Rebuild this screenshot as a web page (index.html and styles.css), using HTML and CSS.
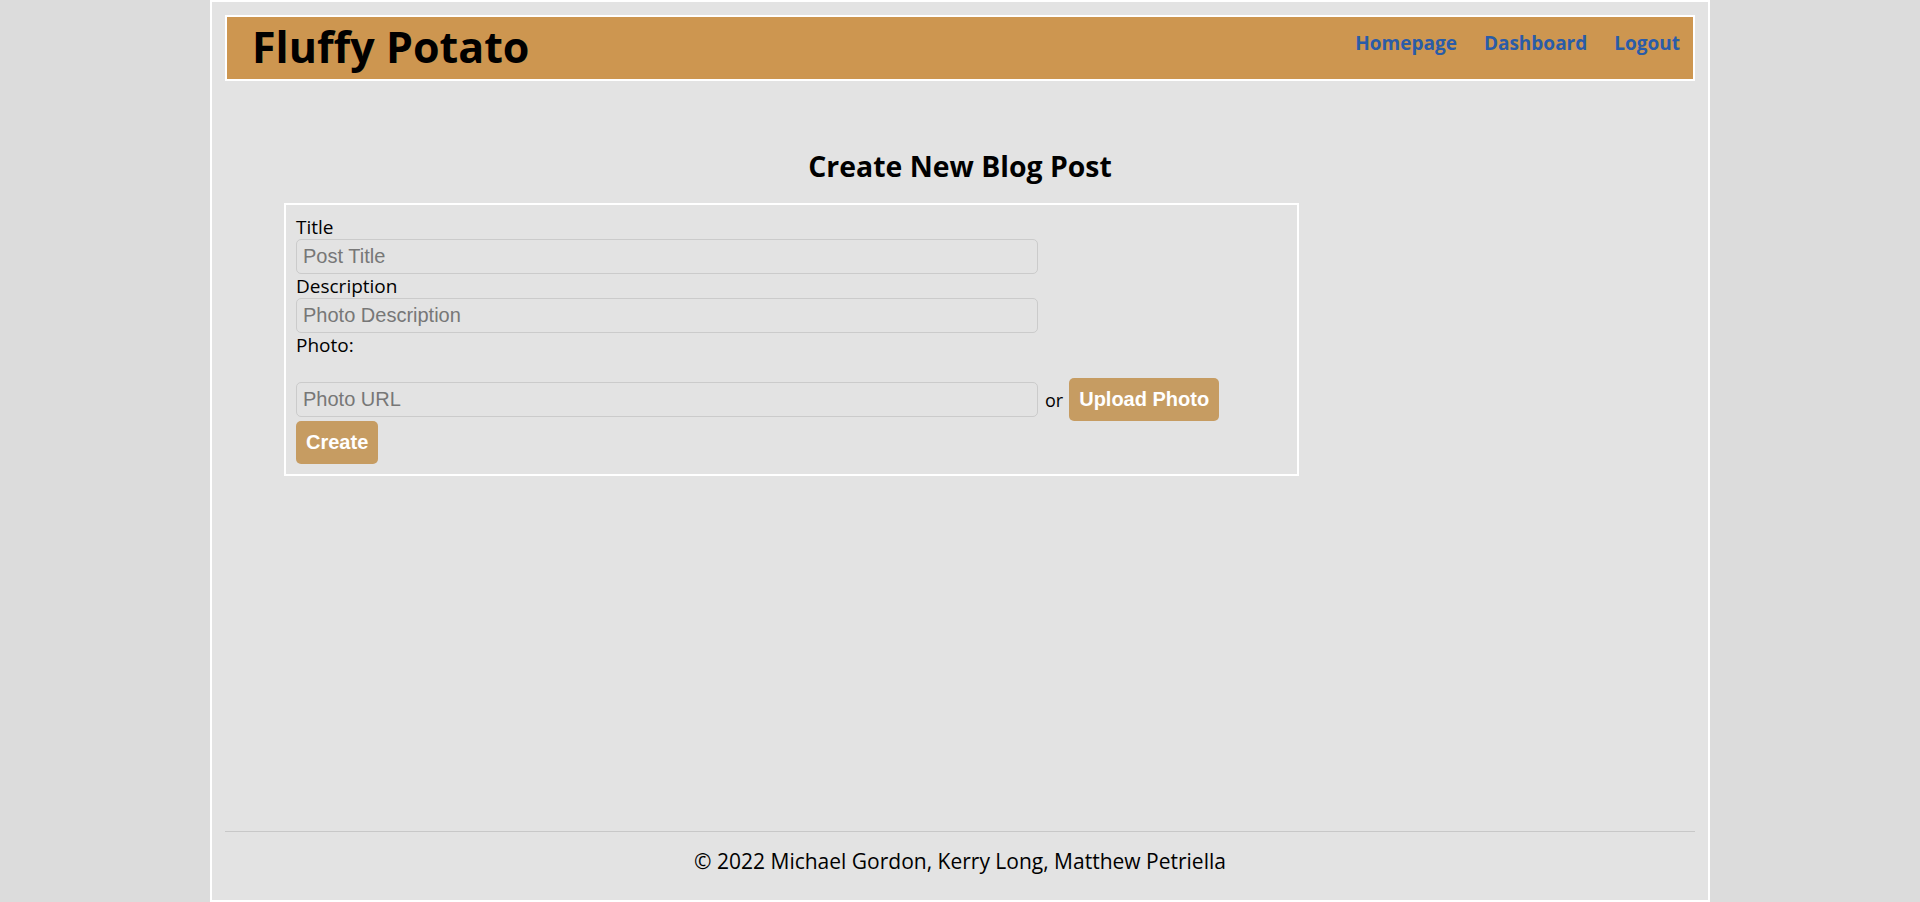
FILE: index.html
```html
<!DOCTYPE html>
<html lang="en">
<head>
<meta charset="utf-8">
<title>Fluffy Potato</title>
<link rel="stylesheet" href="styles.css">
</head>
<body>
<div class="page">
  <header class="site-header">
    <h1 class="brand">Fluffy Potato</h1>
    <nav class="nav">
      <a href="#" class="nav-link">Homepage</a>
      <a href="#" class="nav-link">Dashboard</a>
      <a href="#" class="nav-link">Logout</a>
    </nav>
  </header>
  <main class="main">
    <h2 class="page-title">Create New Blog Post</h2>
    <form class="post-form">
      <label class="field-label" for="title">Title</label>
      <input class="text-input" id="title" type="text" placeholder="Post Title">
      <label class="field-label" for="desc">Description</label>
      <input class="text-input" id="desc" type="text" placeholder="Photo Description">
      <label class="field-label" for="url">Photo:</label>
      <div class="photo-row">
        <input class="text-input" id="url" type="text" placeholder="Photo URL">
        <span class="or">or</span>
        <button type="button" class="btn">Upload Photo</button>
      </div>
      <div class="actions">
        <button type="submit" class="btn">Create</button>
      </div>
    </form>
  </main>
  <footer class="site-footer">
    <div class="footer-rule"></div>
    <p class="copyright">© 2022 Michael Gordon, Kerry Long, Matthew Petriella</p>
  </footer>
</div>
</body>
</html>
```
FILE: styles.css
```css
* { box-sizing: border-box; }

html, body {
  margin: 0;
  padding: 0;
}

body {
  background: #dcdcdc;
  font-family: "Open Sans", "Noto Sans", sans-serif;
  color: #000;
}

.page {
  width: 1500px;
  height: 902px;
  margin: 0 auto;
  background: #e3e3e3;
  border: 2px solid #fff;
  padding: 13px 13px 0;
  display: flex;
  flex-direction: column;
}

.site-header {
  height: 66px;
  flex: 0 0 auto;
  background: #cd9650;
  border: 2px solid #fff;
  display: flex;
  align-items: center;
  justify-content: space-between;
  padding: 0 13px 0 25px;
}

.brand {
  margin: 0;
  font-size: 43px;
  font-weight: 700;
  line-height: 1;
  position: relative;
  top: -2px;
}

.nav {
  display: flex;
  gap: 27px;
  position: relative;
  top: -5px;
}

.nav-link {
  color: #2a5ca8;
  text-decoration: none;
  font-weight: 700;
  font-size: 19px;
}

.main {
  flex: 1 1 auto;
  padding-top: 66px;
}

.page-title {
  margin: 0 0 18px;
  text-align: center;
  font-size: 28.4px;
  font-weight: 700;
  line-height: 38px;
}

.post-form {
  width: 1015px;
  margin-left: 59px;
  border: 2px solid #fff;
  padding: 10px;
  display: flex;
  flex-direction: column;
  align-items: flex-start;
}

.field-label {
  font-size: 19px;
  line-height: 24px;
}

.text-input {
  width: 742px;
  height: 35px;
  border: 1px solid #cbcbcb;
  border-radius: 5px;
  background: transparent;
  padding: 5px 6px;
  font-family: "Liberation Sans", Arial, sans-serif;
  font-size: 20px;
  color: #000;
  outline: none;
}

.text-input::placeholder {
  color: #777;
}

.photo-row {
  display: flex;
  align-items: center;
  margin-top: 21px;
}

.or {
  font-size: 18px;
  margin: 0 6px 0 7px;
}

.btn {
  background: #c69c62;
  color: #fff;
  border: none;
  border-radius: 5px;
  padding: 10px;
  height: 43px;
  font-family: "Liberation Sans", Arial, sans-serif;
  font-size: 20px;
  font-weight: 700;
  line-height: 23px;
  cursor: pointer;
}

.site-footer {
  flex: 0 0 auto;
  height: 69px;
}

.footer-rule {
  height: 1px;
  background: #c8c8c8;
}

.copyright {
  margin: 0;
  padding-top: 15px;
  text-align: center;
  font-size: 21px;
  line-height: 28px;
}
```
